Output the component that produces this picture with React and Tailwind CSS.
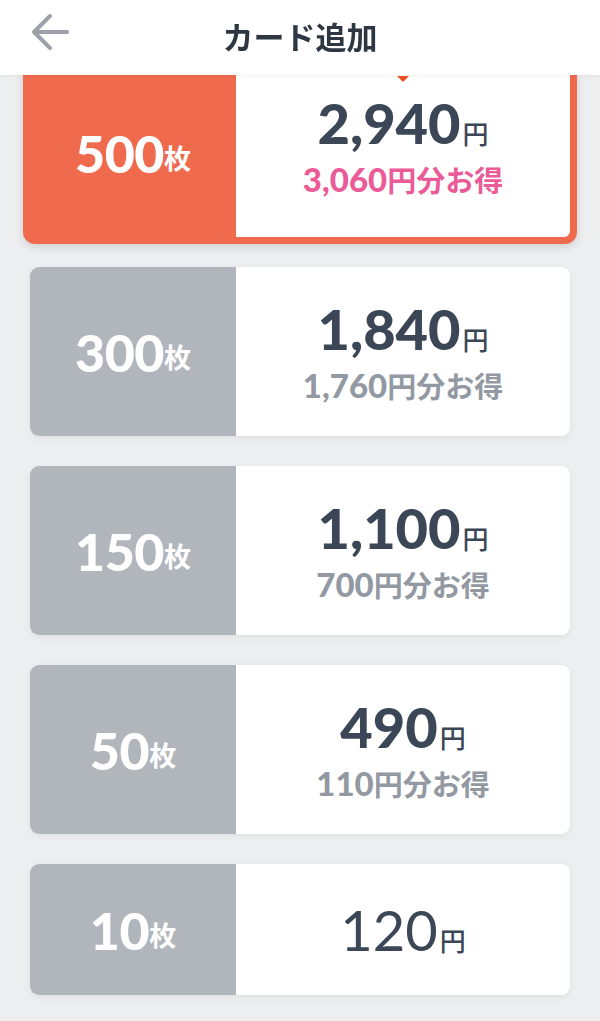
import React from "react";

const plans = [
  { count: "500", price: "2,940", save: "3,060", selected: true },
  { count: "300", price: "1,840", save: "1,760" },
  { count: "150", price: "1,100", save: "700" },
  { count: "50", price: "490", save: "110" },
  { count: "10", price: "120" },
];

const font = { fontFamily: '"Lato", "Noto Sans CJK JP", sans-serif' };

const PlanCard = ({ plan }) => {
  const sel = plan.selected;
  return (
    <div
      className={
        sel
          ? "relative -m-[7px] flex rounded-[12px] border-[7px] border-[#f06b4e] bg-[#f06b4e] shadow-[0_3px_8px_rgba(0,0,0,0.12)]"
          : "flex overflow-hidden rounded-[9px] bg-white shadow-[0_2px_6px_rgba(0,0,0,0.06)]"
      }
    >
      {sel && (
        <div className="absolute left-[367px] top-[8px] z-[1] h-0 w-0 border-x-[6px] border-t-[6px] border-x-transparent border-t-[#ea5320]" />
      )}
      <div
        className={
          (sel ? "bg-[#f06b4e]" : "bg-[#b1b6bc]") +
          " flex w-[206px] items-center justify-center text-white"
        }
      >
        <span className="text-[52px] font-black leading-none tracking-[-0.5px]">{plan.count}</span>
        <span className="mt-[12px] text-[27px] font-bold leading-none">枚</span>
      </div>
      <div
        className={
          "flex flex-1 flex-col items-center justify-center bg-white " +
          (sel ? "h-[169px] rounded-br-[6px] pb-[14px]" : plan.save ? "h-[169px]" : "h-[131px]")
        }
      >
        <div className="flex items-end text-[#3b4656]">
          <span
            className={
              "text-[56px] leading-none " + (plan.save ? "font-black" : "font-normal")
            }
          >
            {plan.price}
          </span>
          <span className="mb-[4px] ml-[2px] text-[26px] font-medium leading-none">円</span>
        </div>
        {plan.save && (
          <div
            className={
              "mt-[12px] flex items-end leading-none " +
              (sel ? "text-[#ea5b97]" : "text-[#9299a3]")
            }
          >
            <span className="text-[33px] font-black">{plan.save}</span>
            <span className="mb-[1px] text-[29px] font-bold">円分お得</span>
          </div>
        )}
      </div>
    </div>
  );
};

const App = () => {
  return (
    <div className="min-h-[1021px] bg-[#eceef0]" style={font}>
      <div className="fixed inset-x-0 top-0 z-10 flex h-[75px] items-center justify-center bg-white shadow-[0_1px_4px_rgba(0,0,0,0.06)]">
        <button className="absolute left-[31px] top-[12px] text-[#9ca1a9]">
          <svg width="40" height="40" viewBox="0 0 40 40" fill="none" stroke="currentColor" strokeWidth="4" strokeLinecap="round" strokeLinejoin="round">
            <path d="M36 20H4" />
            <path d="M19 4L3 20l16 16" />
          </svg>
        </button>
        <h1 className="text-[31px] font-bold text-[#2e3642]">カード追加</h1>
      </div>
      <div className="flex flex-col gap-[30px] px-[30px] pb-[27px] pt-[68px]">
        {plans.map((p) => (
          <PlanCard key={p.count} plan={p} />
        ))}
      </div>
    </div>
  );
};

export default App;
